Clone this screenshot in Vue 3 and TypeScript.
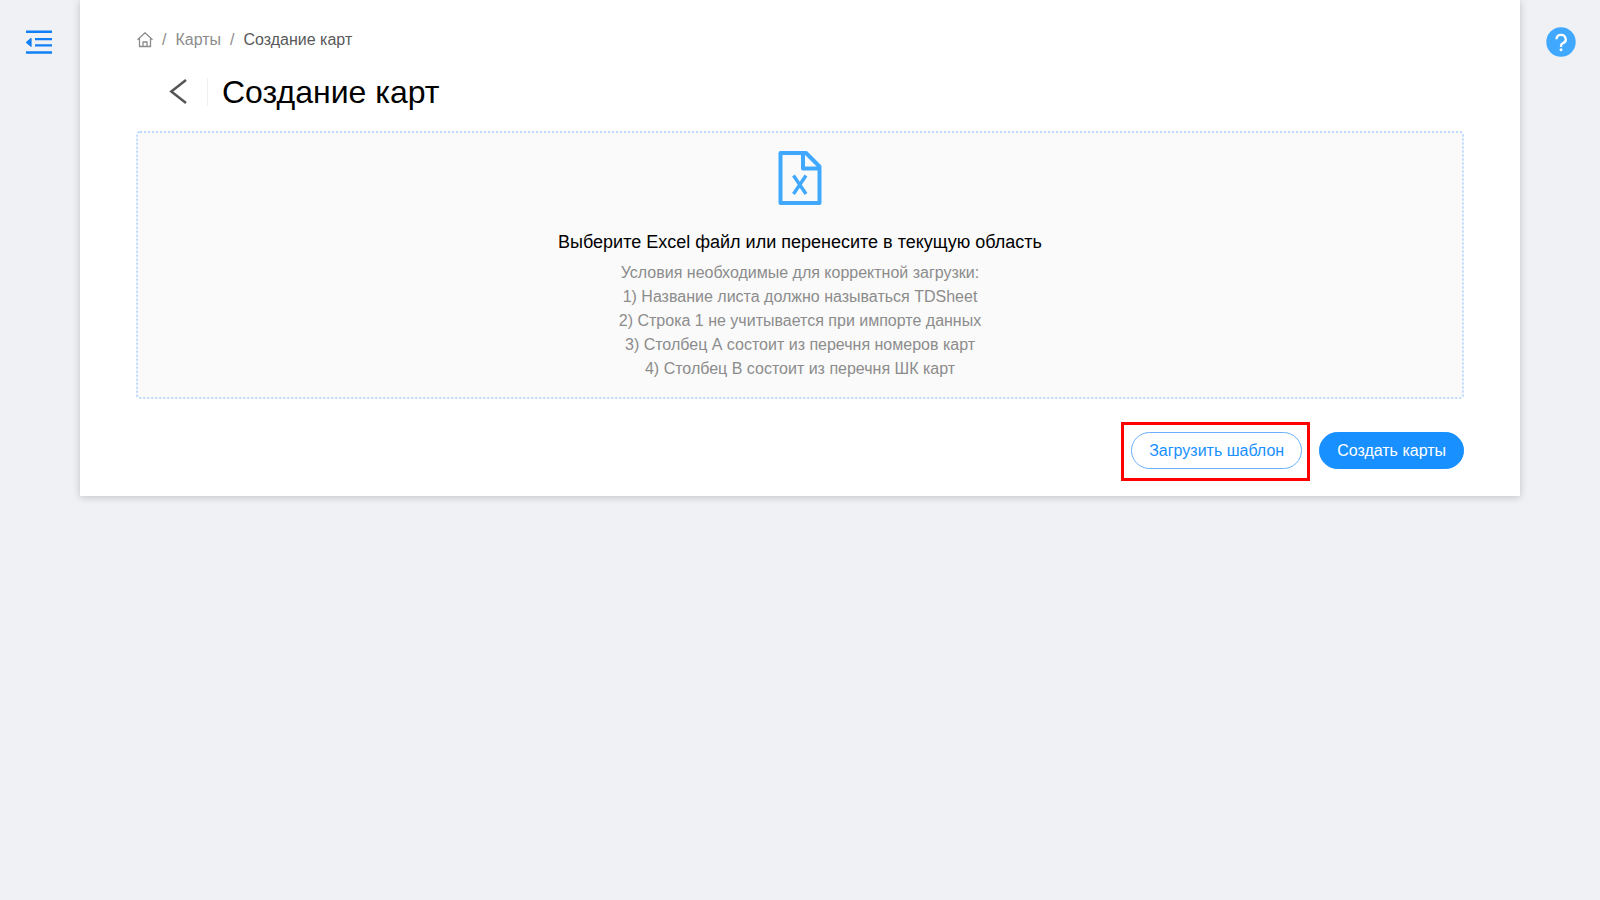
<script setup lang="ts">
const conditions: string[] = [
  'Условия необходимые для корректной загрузки:',
  '1) Название листа должно называться TDSheet',
  '2) Строка 1 не учитывается при импорте данных',
  '3) Столбец А состоит из перечня номеров карт',
  '4) Столбец В состоит из перечня ШК карт',
]
</script>

<template>
  <div class="page">
    <aside class="rail">
      <button class="icon-button" type="button" aria-label="Меню">
        <svg width="28" height="28" viewBox="0 0 28 28" fill="#1280f5">
          <path d="M0 3.500h26V6H0zM9 11h17v2.300H9zM9 17.300h17v2.300H9zM0 24.300h26v2.500H0z" />
          <path d="M5.600 11.400v8a.6.6 0 0 1-.9.400L.3 16a.8.8 0 0 1 0-1.200L4.700 11a.6.6 0 0 1 .9.400z" />
        </svg>
      </button>
    </aside>

    <main class="panel">
      <nav class="breadcrumb">
        <a class="home" href="#" aria-label="Главная">
          <svg width="16" height="16" viewBox="0 0 16 16" fill="none" stroke="#8c8c8c" stroke-width="1.300">
            <path d="M.5 7.800 8 .8l7.500 7M2.500 6.500v8h11v-8M6 14.500v-4.500h4v4.500" />
          </svg>
        </a>
        <span>/</span>
        <a href="#">Карты</a>
        <span>/</span>
        <span class="current">Создание карт</span>
      </nav>

      <header class="heading">
        <button class="icon-button back" type="button" aria-label="Назад">
          <svg width="18" height="26" viewBox="0 0 18 26" fill="none" stroke="#555" stroke-width="2.500">
            <path d="M17 1 2.300 12.500 17 24" />
          </svg>
        </button>
        <h1>Создание карт</h1>
      </header>

      <section class="upload">
        <svg class="file" width="44" height="56" viewBox="0 0 44 56" fill="none" stroke="#40a9ff" stroke-width="4" stroke-linejoin="round">
          <path d="M2.500 3H28l13.500 13.500V53h-39zM25 3v15.500h16.500" />
          <path d="M15.500 25.500 28 44M28 25.500 15.500 44" stroke-width="3.400" />
        </svg>
        <h2>Выберите Excel файл или перенесите в текущую область</h2>
        <p v-for="line in conditions" :key="line">{{ line }}</p>
      </section>

      <footer class="actions">
        <div class="highlight">
          <button class="button" type="button">Загрузить шаблон</button>
        </div>
        <button class="button primary" type="button">Создать карты</button>
      </footer>
    </main>

    <aside class="rail help">
      <button class="icon-button" type="button" aria-label="Помощь">
        <svg width="30" height="30" viewBox="0 0 30 30" fill="none">
          <circle cx="15" cy="15" r="14.700" fill="#40a9ff" />
          <path d="M10.500 12.200a4.600 4.300 0 1 1 6.500 3.900q-2 .9-2 3v1" stroke="#fff" stroke-width="2.300" />
          <circle cx="15" cy="22.800" r="1.500" fill="#fff" />
        </svg>
      </button>
    </aside>
  </div>
</template>

<style>
body {
  background: #f0f1f5;
}
</style>

<style scoped>
.page {
  display: grid;
  grid-template-columns: 80px minmax(0, 1fr) 80px;
  align-items: start;
  min-height: 100vh;
  font-family: "Liberation Sans", Arial, sans-serif;
  font-size: 16px;
  line-height: 24px;
}

.rail {
  display: flex;
  justify-content: center;
  padding-top: 27px;
}

.help {
  padding-left: 2px;
}

.icon-button {
  display: flex;
  padding: 0;
  border: 0;
  background: none;
  cursor: pointer;
}

.panel {
  padding: 28px 56px 15px;
  background: #fff;
  box-shadow: 0 1px 8px rgba(0, 0, 0, 0.2);
}

.breadcrumb {
  display: flex;
  align-items: center;
  gap: 9px;
  padding-left: 1px;
  color: #8c8c8c;
}

.breadcrumb a {
  color: inherit;
  text-decoration: none;
}

.home {
  display: flex;
}

.current {
  color: #595959;
}

.heading {
  display: flex;
  align-items: center;
  height: 40px;
  margin: 20px 0 19px;
  padding-left: 33px;
}

.back {
  margin-right: 20px;
}

h1 {
  margin: 0;
  padding-left: 14px;
  border-left: 1px solid #f0f0f0;
  color: #000;
  font-size: 32px;
  font-weight: 400;
  line-height: 28px;
}

.upload {
  display: flex;
  flex-direction: column;
  align-items: center;
  padding: 17px 16px 16px;
  border: 2px dotted #bcdcff;
  border-radius: 4px;
  background: #fafafa;
  text-align: center;
}

h2 {
  margin: 22px 0 5px;
  color: #000;
  font-size: 18px;
  font-weight: 400;
  line-height: 28px;
}

p {
  margin: 0;
  color: #8c8c8c;
}

.actions {
  display: flex;
  align-items: baseline;
  justify-content: flex-end;
  gap: 9px;
  margin-top: 23px;
}

.highlight {
  padding: 7px 5px 9px 7px;
  border: 3px solid #f00;
}

.button {
  display: block;
  height: 37px;
  padding: 0 17px;
  border: 1px solid #69b1ff;
  border-radius: 19px;
  background: #fff;
  color: #1890ff;
  font: inherit;
  line-height: 24px;
  cursor: pointer;
}

.primary {
  border-color: #1890ff;
  background: #1890ff;
  color: #fff;
}
</style>
